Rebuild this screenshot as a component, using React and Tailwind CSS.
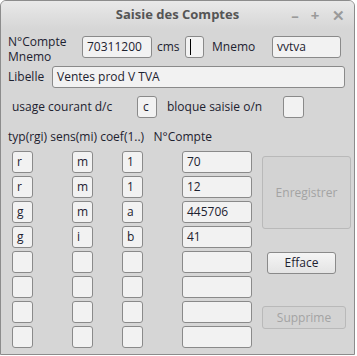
import React from "react";

const inp = "h-[22px] bg-[#f2f2f2] border border-[#8a8a8a] rounded-[3px] flex items-center text-[12px] text-[#1d2230] leading-none";

function Box({ v, w = "w-[21px]" }) {
  return <div className={`${inp} ${w} pl-[4px]`}>{v}</div>;
}

export default function App() {
  const rows = [
    ["r", "m", "1", "70"],
    ["r", "m", "1", "12"],
    ["g", "m", "a", "445706"],
    ["g", "i", "b", "41"],
    ["", "", "", ""],
    ["", "", "", ""],
    ["", "", "", ""],
    ["", "", "", ""],
  ];
  return (
    <div className="w-[357px] h-[356px] bg-white" style={{ fontFamily: "'Open Sans', sans-serif" }}>
      <div className="w-[355px] h-[355px] border border-[#8c8c8c] rounded-t-[6px] bg-[#d6d6d6] overflow-hidden text-[#1d2230]">
        {/* title bar */}
        <div className="h-[28px] relative flex items-center justify-center bg-gradient-to-b from-[#e9e9e9] to-[#d6d6d6]">
          <span className="text-[13px] font-bold text-[#555555]">Saisie des Comptes</span>
          <div className="absolute right-[10px] top-[5px] flex text-[#9a9a9a] text-[15px] font-bold leading-[18px]">
            <span className="w-[12px] text-center">–</span>
            <span className="w-[12px] ml-[8px] text-center">+</span>
            <span className="w-[12px] ml-[11px] text-center">✕</span>
          </div>
        </div>
        {/* content */}
        <div className="pl-[7px]">
          {/* row 1 */}
          <div className="flex items-start mt-[7px] h-[22px]">
            <div className="w-[74px] text-[12px] leading-[15px] -mt-[2px]">
              <div>N°Compte</div>
              <div>Mnemo</div>
            </div>
            <div className={`${inp} w-[70px] pl-[4px]`}>70311200</div>
            <span className="ml-[5px] w-[28px] text-[12px] leading-[22px]">cms</span>
            <div className={`${inp} w-[19px] pl-[4px]`}>
              <div className="w-px h-[16px] bg-black" />
            </div>
            <span className="ml-[8px] w-[60px] text-[12px] leading-[22px]">Mnemo</span>
            <div className={`${inp} w-[69px] pl-[4px]`}>vvtva</div>
          </div>
          {/* Libelle */}
          <div className="flex items-center mt-[8px] h-[21px]">
            <span className="w-[44px] text-[12px]">Libelle</span>
            <div className={`${inp} h-[21px] w-[293px] pl-[4px]`}>Ventes prod V TVA</div>
          </div>
          {/* usage */}
          <div className="flex items-center mt-[9px] h-[22px]">
            <span className="ml-[4px] w-[125px] text-[12px]">usage courant d/c</span>
            <div className={`${inp} w-[20px] pl-[5px]`}>c</div>
            <span className="ml-[10px] w-[116px] text-[12px]">bloque saisie o/n</span>
            <div className={`${inp} w-[21px]`}></div>
          </div>
          {/* header */}
          <div className="mt-[11px] text-[12px] leading-[15px] whitespace-pre">typ(rgi) sens(mi) coef(1..)   N°Compte</div>
          {/* grid */}
          <div className="flex mt-[7px]">
            <div className="flex flex-col gap-[3px] ml-[4px]">
              {rows.map((r, i) => (
                <div key={i} className="flex">
                  <Box v={r[0]} />
                  <div className="ml-[39px]"><Box v={r[1]} /></div>
                  <div className="ml-[29px]"><Box v={r[2]} /></div>
                  <div className="ml-[39px]"><Box v={r[3]} w="w-[70px]" /></div>
                </div>
              ))}
            </div>
            <div className="flex flex-col ml-[10px]">
              <div className="mt-[5px] w-[89px] h-[73px] border border-[#b9b9b9] rounded-[3px] bg-[#d3d3d3] flex items-center justify-center text-[12px] text-[#a3a3a3]">Enregistrer</div>
              <div className="mt-[23px] ml-[5px] w-[69px] h-[22px] border border-[#8a8a8a] rounded-[3px] bg-gradient-to-b from-[#f5f5f5] to-[#e4e4e4] flex items-center justify-center text-[12px] text-[#1d2230]">Efface</div>
              <div className="mt-[32px] w-[84px] h-[23px] border border-[#b9b9b9] rounded-[3px] bg-[#d3d3d3] flex items-center justify-center text-[12px] text-[#a3a3a3]">Supprime</div>
            </div>
          </div>
        </div>
      </div>
    </div>
  );
}
